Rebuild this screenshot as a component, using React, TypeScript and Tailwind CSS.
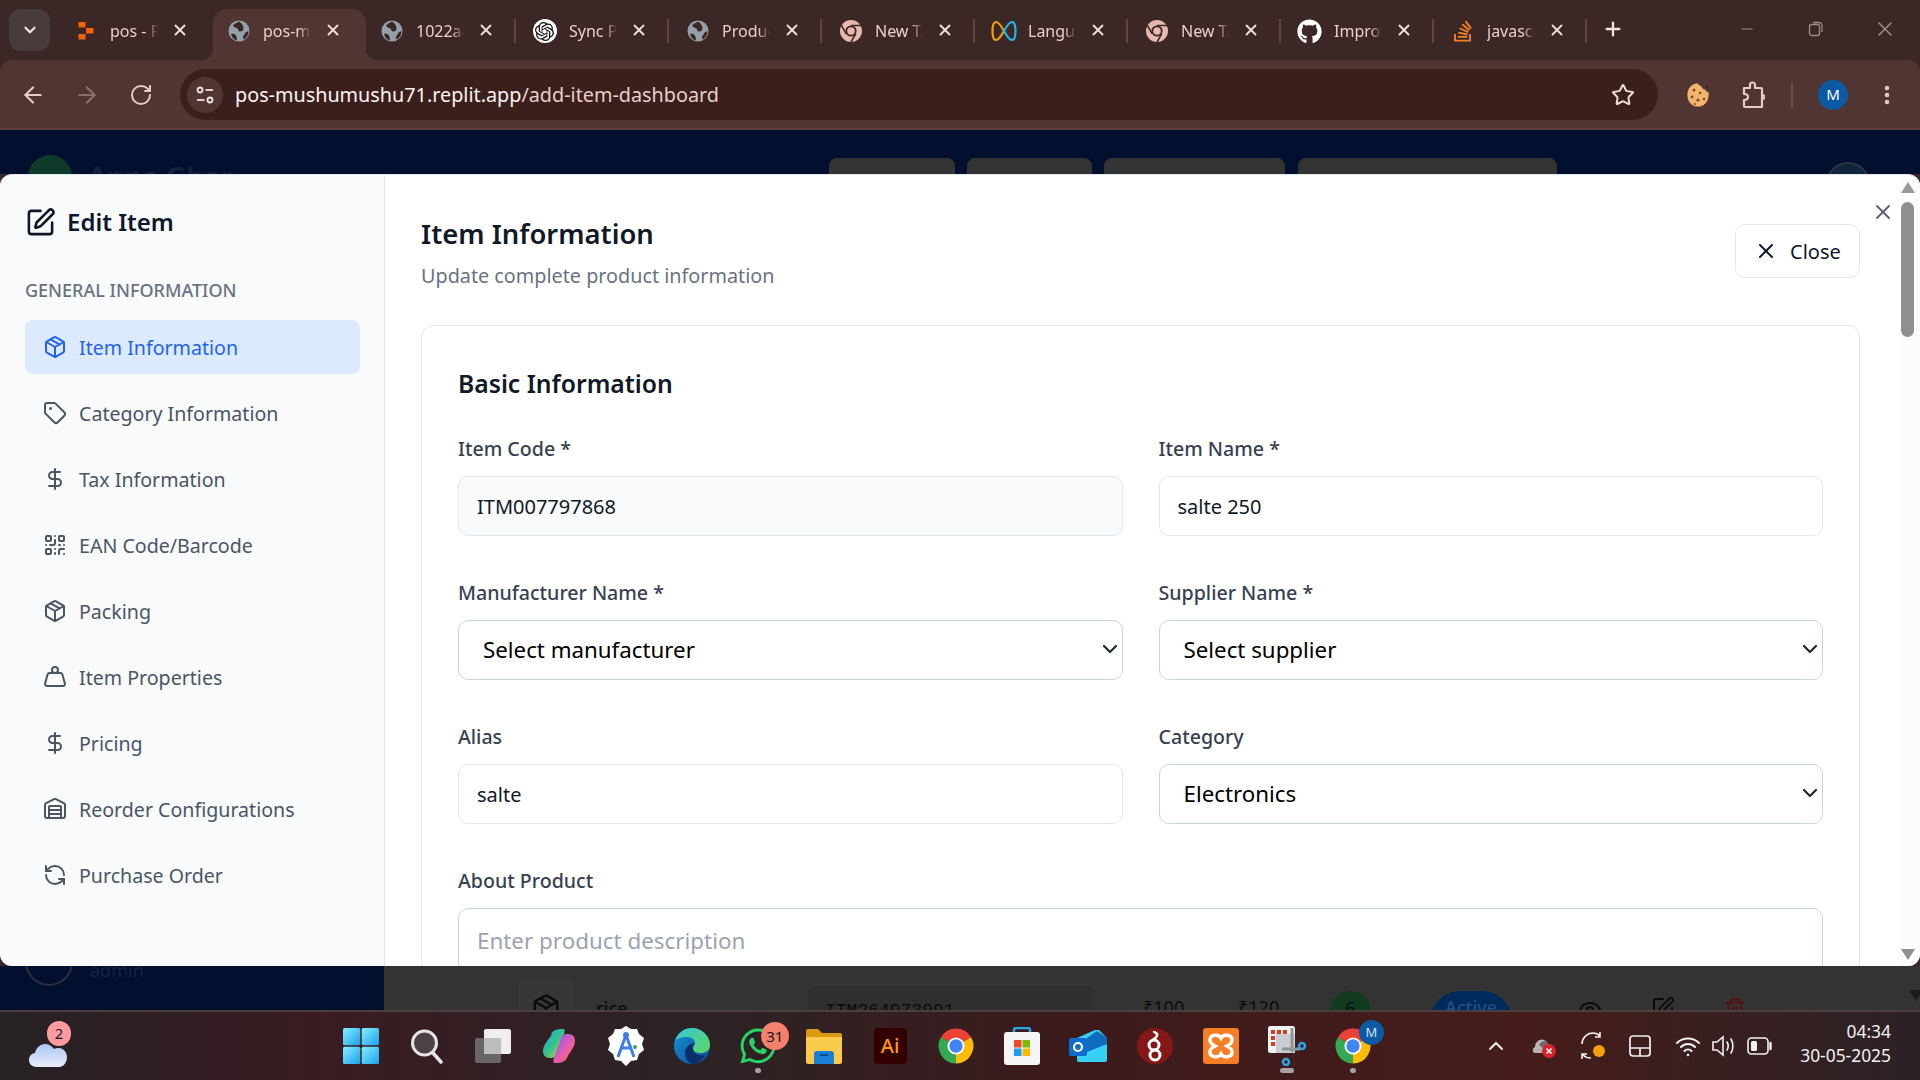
import type { ReactNode } from 'react';
import {
  ArrowLeft,
  ArrowRight,
  ChevronDown,
  ChevronUp,
  DollarSign,
  Eye,
  Minus,
  MoreVertical,
  Package,
  Plus,
  QrCode,
  RefreshCcw,
  RotateCw,
  SquarePen,
  Star,
  Tag,
  Trash2,
  Warehouse,
  Weight,
  X,
} from 'lucide-react';
import { FaGithub, FaStackOverflow, FaWhatsapp } from 'react-icons/fa';
import { SiOpenai } from 'react-icons/si';

const ChromeLogo = ({ size = 24 }: { size?: number }) => (
  <svg width={size} height={size} viewBox="0 0 24 24">
    <path d="M12 12 L2.47 6.5 A11 11 0 0 1 21.53 6.5 Z" fill="#ea4335" />
    <path d="M12 12 L21.53 6.5 A11 11 0 0 1 12 23 Z" fill="#fbbc04" />
    <path d="M12 12 L12 23 A11 11 0 0 1 2.47 6.5 Z" fill="#34a853" />
    <circle cx="12" cy="12" r="5.4" fill="#ffffff" />
    <circle cx="12" cy="12" r="4.2" fill="#4285f4" />
  </svg>
);

// tab favicon for chrome pages, single colour with dark dividers
const ChromeMono = () => (
  <svg width="24" height="24" viewBox="0 0 24 24">
    <circle cx="12" cy="12" r="11" fill="#e8b8ae" />
    <path d="M12 6.500H22M7.200 14.800L2.400 6.500M16.800 14.800L12 23" stroke="#3a2726" strokeWidth="1.500" />
    <circle cx="12" cy="12" r="5.600" fill="#3a2726" />
    <circle cx="12" cy="12" r="3.800" fill="#e8b8ae" />
  </svg>
);

const GlobeTab = () => (
  <svg width="22" height="22" viewBox="0 0 22 22">
    <circle cx="11" cy="11" r="10.500" fill="#94a0a8" />
    <path d="M11 1.500c-2 1.500-4.500 2-6 4 1 2 3 2 4.500 3 1 1 .5 2.500 2 3 2 .5 4-1 4-3 0-3-1.500-5-4.500-7Z" fill="#3a2726" />
    <path d="M3 14c2-.5 4 0 5 1.500s.5 3.500 1 5c-3-.5-5-3-6-6.500Z" fill="#3a2726" />
    <path d="M20.500 11.500c-1.500 0-3 .500-3.500 2-.5 1.500-2 2-2 4 0 1 .5 1.500 1 2 2.500-1.500 4.300-4.500 4.500-8Z" fill="#3a2726" />
  </svg>
);

const ReplitMark = () => (
  <svg width="16" height="18" viewBox="0 0 15 18">
    <rect x="0" y="0" width="7" height="5.500" fill="#f26207" />
    <rect x="7.500" y="6" width="7.500" height="5.500" fill="#f26207" />
    <rect x="0" y="12" width="7" height="5.500" fill="#f26207" />
  </svg>
);

const InfinityMark = () => (
  <svg width="26" height="24" viewBox="0 0 26 24" fill="none" strokeWidth="2.200">
    <path d="M13 12c-2.500-4.500-5-9-8-9-2.500 0-3.500 4-3.500 9s1 9 3.500 9c3 0 5.500-4.500 8-9Z" stroke="#f59e0b" />
    <path d="M13 12c2.500 4.500 5 9 8 9 2.500 0 3.500-4 3.500-9s-1-9-3.500-9c-3 0-5.500 4.500-8 9Z" stroke="#22b8e6" />
  </svg>
);

const tabs: { title: string; icon: ReactNode; active?: boolean }[] = [
  { title: 'pos - Replit', icon: <ReplitMark /> },
  { title: 'pos-mushu', icon: <GlobeTab />, active: true },
  { title: '1022a4b7', icon: <GlobeTab /> },
  {
    title: 'Sync Pro',
    icon: (
      <span className="flex h-[24px] w-[24px] items-center justify-center rounded-full bg-white">
        <SiOpenai size={19} color="#111111" />
      </span>
    ),
  },
  { title: 'Product', icon: <GlobeTab /> },
  { title: 'New Tab', icon: <ChromeMono /> },
  { title: 'Language', icon: <InfinityMark /> },
  { title: 'New Tab', icon: <ChromeMono /> },
  { title: 'Improve', icon: <FaGithub size={25} color="#ffffff" /> },
  { title: 'javascript', icon: <FaStackOverflow size={24} color="#f48024" /> },
];

const TabStrip = () => (
  <div className="flex h-[60px] shrink-0 bg-[#3a2726] pl-[9px]">
    <div className="mt-[9px] mr-[10px] flex h-[42px] w-[41px] items-center justify-center rounded-[12px] bg-[#483c3a]">
      <ChevronDown size={18} strokeWidth={3} color="#f3e2de" />
    </div>
    {tabs.map((tab, i) => (
      <div
        key={i}
        className={`relative mt-[9px] flex h-[51px] w-[153px] items-start pt-[8px] ${
          tab.active ? 'rounded-t-[14px] bg-[#503533]' : ''
        }`}
      >
        {tab.active && (
          <>
            <span className="absolute bottom-0 -left-[12px] h-[12px] w-[12px] bg-[radial-gradient(circle_at_0_0,transparent_12px,#503533_12.500px)]" />
            <span className="absolute -right-[12px] bottom-0 h-[12px] w-[12px] bg-[radial-gradient(circle_at_100%_0,transparent_12px,#503533_12.500px)]" />
          </>
        )}
        <span className="flex h-[28px] w-[50px] shrink-0 items-center justify-center pl-[1px]">{tab.icon}</span>
        <span className="w-[48px] overflow-hidden pt-[2px] text-[16px] leading-[24px] whitespace-nowrap text-[#e9cfc9] [mask-image:linear-gradient(90deg,#000_75%,transparent)]">
          {tab.title}
        </span>
        <span className="ml-[12px] flex h-[26px] w-[20px] items-center justify-center">
          <X size={18} strokeWidth={2.500} color="#f0dcd7" />
        </span>
        {i > 1 && <span className="absolute top-[10px] right-[3px] h-[24px] w-[2px] bg-[#5c4644]" />}
      </div>
    ))}
    <div className="ml-[10px] flex h-[60px] w-[26px] items-center justify-center pb-[2px]">
      <Plus size={22} strokeWidth={2.500} color="#f3e2de" />
    </div>
    <div className="ml-auto flex h-[60px] items-center pb-[2px]">
      <span className="flex w-[69px] justify-center">
        <Minus size={18} strokeWidth={1.500} color="#a08c88" />
      </span>
      <span className="flex w-[69px] justify-center">
        <svg width="16" height="16" viewBox="0 0 16 16" fill="none" stroke="#a08c88" strokeWidth="1.300">
          <rect x="1.500" y="3.500" width="10" height="11" rx="2" />
          <path d="M5 1.500h6a3 3 0 0 1 3 3V11" />
        </svg>
      </span>
      <span className="flex w-[70px] justify-center">
        <X size={24} strokeWidth={1.500} color="#a08c88" />
      </span>
    </div>
  </div>
);

const CookieIcon = () => (
  <svg width="26" height="28" viewBox="0 0 26 28">
    <path d="M13 2c1 2 2 3 4 3 0 2 1 3 3 3 1 2 2 3 4 3 1 7-3 15-11 15C6 26 2 20 2 14S6 2 13 2Z" fill="#f2b36c" stroke="#3a2726" strokeWidth=".6" />
    <g fill="#7a4b24">
      <circle cx="9" cy="9" r="1.500" />
      <circle cx="15" cy="12" r="1.300" />
      <circle cx="7" cy="16" r="1.400" />
      <circle cx="13" cy="19" r="1.600" />
      <circle cx="19" cy="18" r="1.200" />
      <circle cx="10" cy="23" r="1" />
    </g>
    <circle cx="22" cy="6" r="1" fill="#2a1a12" />
  </svg>
);

const ExtensionIcon = () => (
  <svg width="24" height="28" viewBox="0 0 24 28" fill="none" stroke="#ecc9c1" strokeWidth="2.200" strokeLinejoin="round">
    <path d="M3 7h6V4a2.500 2.500 0 0 1 5 0v3h6a1 1 0 0 1 1 1v18H4a1 1 0 0 1-1-1v-6c3 0 4-1.500 4-3s-1-3-4-3Z" />
    <path d="M21 14c2 0 2.500 1 2.500 2s-.5 2-2.500 2" />
  </svg>
);

const SiteIcon = () => (
  <svg width="20" height="20" viewBox="0 0 20 20" fill="none" stroke="#f0e2df" strokeWidth="1.800">
    <circle cx="5" cy="5" r="2.500" />
    <path d="M10.500 5H18" />
    <circle cx="15" cy="15" r="2.500" />
    <path d="M2 15h7.500" />
  </svg>
);

const Toolbar = () => (
  <div className="flex h-[70px] shrink-0 items-start rounded-t-[12px] border-b-2 border-[#5d403e] bg-[#503533] pt-[9px]">
    <div className="flex h-[51px] w-[180px] shrink-0 items-center pl-[20px]">
      <ArrowLeft size={26} strokeWidth={2} color="#ecc9c1" />
      <ArrowRight size={26} strokeWidth={2} color="#8d6f6a" className="ml-[28px]" />
      <RotateCw size={24} strokeWidth={2} color="#ecc9c1" className="ml-[29px]" />
    </div>
    <div className="flex h-[51px] w-[1478px] items-center rounded-full bg-[#3b1f1c] pl-[7px]">
      <span className="flex h-[36px] w-[36px] items-center justify-center rounded-full bg-[#503533]">
        <SiteIcon />
      </span>
      <span className="ml-[12px] text-[19.800px] leading-[28px] text-[#e6cfca]">
        <span className="text-[#fbf3f1]">pos-mushumushu71.replit.app</span>/add-item-dashboard
      </span>
      <Star size={24} strokeWidth={2} color="#f0dcd7" className="mr-[23px] ml-auto" />
    </div>
    <div className="flex h-[51px] flex-1 items-center">
      <span className="ml-[27px]">
        <CookieIcon />
      </span>
      <span className="ml-[30px] flex">
        <ExtensionIcon />
      </span>
      <span className="ml-[26px] h-[26px] w-[2px] bg-[#6b4f4c]" />
      <span className="ml-[25px] flex h-[30px] w-[30px] items-center justify-center rounded-full bg-[#0b5aa3] text-[15px] text-white">
        M
      </span>
      <MoreVertical size={24} strokeWidth={2.500} color="#ecc9c1" className="ml-[27px]" />
    </div>
  </div>
);

const navItems = [
  { label: 'Item Information', icon: Package, active: true },
  { label: 'Category Information', icon: Tag },
  { label: 'Tax Information', icon: DollarSign },
  { label: 'EAN Code/Barcode', icon: QrCode },
  { label: 'Packing', icon: Package },
  { label: 'Item Properties', icon: Weight },
  { label: 'Pricing', icon: DollarSign },
  { label: 'Reorder Configurations', icon: Warehouse },
  { label: 'Purchase Order', icon: RefreshCcw },
];

const Sidebar = () => (
  <aside className="w-[385px] shrink-0 rounded-l-[12px] border-r border-[#e2e8f0] bg-[#f8fafc] pr-[24px] pl-[25px]">
    <div className="mt-[29px] flex h-[36px] items-center text-[#0f172a]">
      <SquarePen size={31} strokeWidth={2} />
      <span className="ml-[11px] text-[24px] leading-[32px] font-semibold">Edit Item</span>
    </div>
    <p className="mt-[37px] text-[18px] leading-[26px] font-medium text-[#6b7280] uppercase">General Information</p>
    <nav className="mt-[17px] flex flex-col gap-[12px]">
      {navItems.map((item) => {
        const Icon = item.icon;
        return (
          <div
            key={item.label}
            className={`flex h-[54px] items-center rounded-[8px] pl-[18px] text-[19.600px] ${
              item.active ? 'bg-[#dbeafe] text-[#2563eb]' : 'text-[#4b5563]'
            }`}
          >
            <Icon size={24} strokeWidth={2} />
            <span className="ml-[12px] pt-[2px]">{item.label}</span>
          </div>
        );
      })}
    </nav>
  </aside>
);

const Label = ({ children }: { children: ReactNode }) => (
  <label className="mb-[13px] block text-[19.600px] leading-[28px] font-medium text-[#374151]">{children}</label>
);

const inputClass =
  'block h-[60px] w-full rounded-[10px] border border-[#e2e8f0] px-[18px] text-[20px] text-[#111827] outline-none';

const SelectField = ({ value }: { value: string }) => (
  <div className="relative">
    <select
      defaultValue={value}
      className="block h-[60px] w-full appearance-none rounded-[10px] border border-[#cbd5e1] bg-white pr-[30px] pl-[24px] text-[22.300px] text-black outline-none"
    >
      <option>{value}</option>
    </select>
    <ChevronDown size={24} strokeWidth={2.200} color="#1f2937" className="pointer-events-none absolute top-[17px] right-[1px]" />
  </div>
);

const ItemForm = () => (
  <div className="rounded-t-[12px] border border-[#e5e7eb] px-[36px] pt-[42px] pb-[40px]">
    <h3 className="mb-[35px] text-[24.700px] leading-[32px] font-semibold text-[#111827]">Basic Information</h3>
    <div className="grid grid-cols-2 gap-x-[36px] gap-y-[43px]">
      <div>
        <Label>Item Code *</Label>
        <input readOnly value="ITM007797868" className={`${inputClass} bg-[#f8fafc]`} />
      </div>
      <div>
        <Label>Item Name *</Label>
        <input readOnly value="salte 250" className={inputClass} />
      </div>
      <div>
        <Label>Manufacturer Name *</Label>
        <SelectField value="Select manufacturer" />
      </div>
      <div>
        <Label>Supplier Name *</Label>
        <SelectField value="Select supplier" />
      </div>
      <div>
        <Label>Alias</Label>
        <input readOnly value="salte" className={inputClass} />
      </div>
      <div>
        <Label>Category</Label>
        <SelectField value="Electronics" />
      </div>
      <div className="col-span-2">
        <Label>About Product</Label>
        <textarea
          readOnly
          placeholder="Enter product description"
          className="block h-[120px] w-full resize-none rounded-[10px] border border-[#cbd5e1] px-[18px] pt-[16px] text-[22.400px] leading-[32px] outline-none placeholder:text-[#9ca3af]"
        />
      </div>
    </div>
  </div>
);

const Dialog = () => (
  <div className="absolute inset-x-0 top-[44px] bottom-[44px] flex overflow-hidden rounded-[12px] border-t border-[#e2e8f0] bg-white">
    <Sidebar />
    <main className="relative min-w-0 flex-1 overflow-hidden pr-[40px] pl-[36px]">
      <div className="flex items-start justify-between pt-[41px]">
        <div>
          <h2 className="text-[27.400px] leading-[36px] font-semibold text-[#111827]">Item Information</h2>
          <p className="mt-[10px] text-[19.800px] leading-[28px] text-[#6b7280]">Update complete product information</p>
        </div>
        <button className="mt-[8px] flex h-[54px] w-[125px] items-center rounded-[10px] border border-[#e2e8f0] bg-white pl-[18px] text-[20px] text-[#0f172a]">
          <X size={24} strokeWidth={2} />
          <span className="ml-[12px] pt-[1px]">Close</span>
        </button>
      </div>
      <div className="mt-[35px]">
        <ItemForm />
      </div>
      <X size={24} strokeWidth={2} color="#5b6472" className="absolute top-[25px] right-[5px]" />
    </main>
    <div className="flex w-[20px] shrink-0 flex-col items-center bg-[#fcfcfc] pr-[5px]">
      <span className="mt-[7px] h-0 w-0 border-x-[7px] border-b-[11px] border-x-transparent border-b-[#9a9a9a]" />
      <span className="mt-[9px] h-[135px] w-[13px] rounded-full bg-[#8f8f8f]" />
      <span className="mt-auto mb-[6px] h-0 w-0 border-x-[7px] border-t-[11px] border-x-transparent border-t-[#8f8f8f]" />
    </div>
  </div>
);

const BackdropHeader = () => (
  <div className="flex h-[44px] shrink-0 overflow-hidden bg-[#030f2f]">
    <div className="flex w-[829px] shrink-0">
      <span className="mt-[25px] ml-[28px] h-[44px] w-[44px] rounded-full bg-[#0f3a2a]" />
      <span className="mt-[26px] ml-[16px] text-[28px] font-semibold whitespace-nowrap text-[#16233f]">Apna Ghar</span>
    </div>
    <span className="mt-[28px] h-[40px] w-[126px] rounded-t-[8px] bg-[#333333]" />
    <span className="mt-[28px] ml-[12px] h-[40px] w-[125px] rounded-t-[8px] bg-[#333333]" />
    <span className="mt-[28px] ml-[12px] h-[40px] w-[181px] rounded-t-[8px] bg-[#333333]" />
    <span className="mt-[28px] ml-[13px] h-[40px] w-[259px] rounded-t-[8px] bg-[#333333]" />
    <span className="mt-[32px] ml-[269px] h-[44px] w-[44px] rounded-full border-2 border-[#2d3240] bg-[#10243a]" />
  </div>
);

const BackdropFooter = () => (
  <div className="flex h-[44px] shrink-0">
    <div className="flex w-[384px] shrink-0 bg-[#030f2f] pl-[25px]">
      <span className="-mt-[28px] h-[48px] w-[48px] rounded-full border-2 border-[#2a2e3b]" />
      <span className="-mt-[8px] ml-[17px] h-[24px] text-[18px] leading-[24px] text-[#16233f]">admin</span>
    </div>
    <div className="flex min-w-0 flex-1 items-start overflow-hidden bg-[#333333] text-[#0c0c0c]">
      <span className="mt-[12px] ml-[134px] flex h-[56px] w-[56px] shrink-0 justify-center rounded-[8px] bg-[#373737] pt-[15px]">
        <Package size={30} strokeWidth={2} />
      </span>
      <span className="mt-[29px] w-[235px] shrink-0 pl-[22px] text-[18px] font-medium">rice</span>
      <span className="mt-[20px] h-[40px] w-[284px] shrink-0 rounded-[6px] bg-[#2f2f2f] pt-[12px] pl-[16px] font-['Liberation_Mono',monospace] text-[18px]">
        ITM264973991
      </span>
      <span className="mt-[28px] ml-[50px] w-[95px] shrink-0 text-[18px]">₹100</span>
      <span className="mt-[28px] w-[92px] shrink-0 text-[18px]">₹120</span>
      <span className="mt-[25px] flex h-[60px] w-[41px] shrink-0 justify-center rounded-full bg-[#123a1f] pt-[4px] text-[18px]">
        6
      </span>
      <span className="mt-[25px] ml-[59px] flex h-[60px] w-[82px] shrink-0 justify-center rounded-full bg-[#002a5c] pt-[3px] text-[18px] font-medium text-[#1e4f8a]">
        Active
      </span>
      <Eye size={24} strokeWidth={2} className="mt-[32px] ml-[66px] shrink-0" />
      <SquarePen size={24} strokeWidth={2} className="mt-[30px] ml-[49px] shrink-0" />
      <Trash2 size={22} strokeWidth={2} color="#5a0f0f" className="mt-[31px] ml-[49px] shrink-0" />
      <span className="mt-[24px] ml-[163px] h-0 w-0 shrink-0 border-x-[7px] border-t-[11px] border-x-transparent border-t-[#1c1c1c]" />
    </div>
  </div>
);

const TaskIcon = ({ children, badge, dot }: { children: ReactNode; badge?: ReactNode; dot?: 'round' | 'wide' }) => (
  <div className="relative flex h-[68px] w-[66.130px] shrink-0 items-center justify-center">
    {children}
    {badge}
    {dot && (
      <span
        className={`absolute bottom-[7px] h-[5px] rounded-full bg-[#a8a3a3] ${dot === 'wide' ? 'w-[14px]' : 'w-[6px]'}`}
      />
    )}
  </div>
);

const StartIcon = () => (
  <svg width="36" height="36" viewBox="0 0 36 36">
    <defs>
      <linearGradient id="startGrad" x1="0" y1="0" x2="1" y2="1">
        <stop offset="0" stopColor="#86efff" />
        <stop offset="1" stopColor="#1ba0ec" />
      </linearGradient>
    </defs>
    <rect x="0" y="0" width="17.300" height="17.300" rx="1.500" fill="url(#startGrad)" />
    <rect x="18.700" y="0" width="17.300" height="17.300" rx="1.500" fill="url(#startGrad)" />
    <rect x="0" y="18.700" width="17.300" height="17.300" rx="1.500" fill="url(#startGrad)" />
    <rect x="18.700" y="18.700" width="17.300" height="17.300" rx="1.500" fill="url(#startGrad)" />
  </svg>
);

const SearchIcon = () => (
  <svg width="34" height="36" viewBox="0 0 34 36" fill="none">
    <circle cx="14.500" cy="15" r="12" fill="#4d4243" stroke="#e5e5e5" strokeWidth="3" />
    <path d="M23 25l8 9" stroke="#e5e5e5" strokeWidth="3.500" strokeLinecap="round" />
  </svg>
);

const TaskViewIcon = () => (
  <svg width="36" height="36" viewBox="0 0 36 36">
    <rect x="9" y="1" width="27" height="25" rx="2" fill="#eeeeee" />
    <rect x="0" y="10" width="26" height="25" rx="2" fill="#6b6b6b" fillOpacity=".92" />
    <rect x="9" y="10" width="17" height="16" fill="#bdbdbd" />
  </svg>
);

const CopilotIcon = () => (
  <svg width="34" height="36" viewBox="0 0 34 36">
    <defs>
      <linearGradient id="copA" x1="0" y1="0" x2="1" y2="1">
        <stop offset="0" stopColor="#2a9df4" />
        <stop offset=".5" stopColor="#31c48d" />
        <stop offset="1" stopColor="#f8c537" />
      </linearGradient>
      <linearGradient id="copB" x1="0" y1="0" x2="1" y2="1">
        <stop offset="0" stopColor="#7a5af8" />
        <stop offset=".6" stopColor="#ee5fa7" />
        <stop offset="1" stopColor="#f97316" />
      </linearGradient>
    </defs>
    <path d="M9 6C11 2 15 1 21 1c2 0 2 2 1 5l-7 20c-1 3-3 4-7 4-5 0-7-3-7-7 0-6 6-12 9-17Z" fill="url(#copA)" />
    <path d="M25 30c-2 4-6 5-12 5-2 0-2-2-1-5l7-20c1-3 3-4 7-4 5 0 7 3 7 7 0 6-6 12-8 17Z" fill="url(#copB)" />
  </svg>
);

const StudioIcon = () => (
  <svg width="36" height="40" viewBox="0 0 36 40">
    <path d="M18 0l5 3 6 0 2 5 5 4-2 6 2 6-5 4-2 6-6 1-5 5-5-5-6-1-2-6-5-4 2-6-2-6 5-4 2-5 6 0Z" fill="#ffffff" />
    <path d="M18 9l-8 22M18 9l8 22M12 22h12" stroke="#3f7ee8" strokeWidth="3" fill="none" />
    <circle cx="18" cy="9" r="3" fill="#3f7ee8" />
    <circle cx="27" cy="21" r="2" fill="#36a852" />
  </svg>
);

const EdgeIcon = () => (
  <svg width="36" height="36" viewBox="0 0 36 36">
    <defs>
      <linearGradient id="edgeA" x1="0" y1="0" x2="1" y2="1">
        <stop offset="0" stopColor="#36c6d9" />
        <stop offset="1" stopColor="#5fd85f" />
      </linearGradient>
      <linearGradient id="edgeB" x1="0" y1="0" x2="1" y2="1">
        <stop offset="0" stopColor="#1591d6" />
        <stop offset="1" stopColor="#0c4d96" />
      </linearGradient>
    </defs>
    <circle cx="18" cy="18" r="18" fill="url(#edgeB)" />
    <path d="M1 13C4 4 11 0 18 0c10 0 18 8 18 17 0 6-5 8-9 8-5 0-8-2-8-5 0-2 2-3 2-5 0-3-3-6-8-6-6 0-10 2-12 4Z" fill="url(#edgeA)" />
    <path d="M20 36c-5 0-9-5-9-11s5-10 10-10c-2 2-3 4-2 7 1 4 5 6 12 5-3 5-7 9-11 9Z" fill="#0b2f6b" />
  </svg>
);

const FolderIcon = () => (
  <svg width="36" height="36" viewBox="0 0 36 36">
    <path d="M0 3a2 2 0 0 1 2-2h10l4 4h18a2 2 0 0 1 2 2v4H0Z" fill="#d99a12" />
    <path d="M0 9h36v25a2 2 0 0 1-2 2H2a2 2 0 0 1-2-2Z" fill="#fbcb4b" />
    <path d="M8 36V26a3 3 0 0 1 3-3h14a3 3 0 0 1 3 3v10Z" fill="#1b7fd6" />
    <rect x="14" y="26" width="8" height="2" fill="#0b4e92" />
  </svg>
);

const StoreIcon = () => (
  <svg width="36" height="38" viewBox="0 0 36 38">
    <path d="M10 6V3a2 2 0 0 1 2-2h12a2 2 0 0 1 2 2v3" fill="none" stroke="#2aa6e8" strokeWidth="2.500" />
    <rect x="0" y="5" width="36" height="33" rx="3" fill="#f5f5f5" />
    <rect x="10" y="13" width="7.500" height="7.500" fill="#ea4b2a" />
    <rect x="18.500" y="13" width="7.500" height="7.500" fill="#7fba00" />
    <rect x="10" y="21.500" width="7.500" height="7.500" fill="#1e9bea" />
    <rect x="18.500" y="21.500" width="7.500" height="7.500" fill="#fdb900" />
  </svg>
);

const OutlookIcon = () => (
  <svg width="38" height="32" viewBox="0 0 38 32">
    <path d="M8 8L26 0h4l8 8v22a2 2 0 0 1-2 2H10a2 2 0 0 1-2-2Z" fill="#38d1f5" />
    <path d="M18 8L28 1l10 7v6l-20 8Z" fill="#0f6cbd" />
    <rect x="0" y="8" width="18" height="18" rx="2" fill="#0f6cce" />
    <circle cx="9" cy="17" r="4" fill="none" stroke="#ffffff" strokeWidth="2.200" />
  </svg>
);

const DragonIcon = () => (
  <svg width="36" height="36" viewBox="0 0 36 36" fill="none">
    <circle cx="18" cy="18" r="18" fill="#851716" />
    <circle cx="17" cy="17" r="5" stroke="#ffffff" strokeWidth="3" />
    <circle cx="18" cy="27" r="5" stroke="#ffffff" strokeWidth="3" />
    <path d="M16 12c2-2 5-3 4-6-1-2-3-1-3-3" stroke="#ffffff" strokeWidth="2.500" />
  </svg>
);

const XamppIcon = () => (
  <svg width="36" height="36" viewBox="0 0 36 36" fill="none">
    <rect width="36" height="36" rx="3" fill="#f57f24" />
    <path d="M18 10c-2-4-11-4-11 2 0 3 3 5 5 6-2 1-5 3-5 6 0 6 9 6 11 2 2 4 11 4 11-2 0-3-3-5-5-6 2-1 5-3 5-6 0-6-9-6-11-2Z" stroke="#ffffff" strokeWidth="3.500" />
  </svg>
);

const SnipIcon = () => (
  <svg width="38" height="40" viewBox="0 0 38 40" fill="none">
    <rect width="27" height="27" rx="2.500" fill="#f2f2f2" />
    <rect x="3" y="4" width="4" height="4" fill="#d63b1f" />
    <rect x="9" y="4" width="4" height="4" fill="#d63b1f" />
    <rect x="15" y="4" width="4" height="4" fill="#d63b1f" />
    <rect x="3" y="10" width="4" height="4" fill="#d63b1f" />
    <rect x="3" y="16" width="4" height="4" fill="#d63b1f" />
    <rect x="8" y="8" width="19" height="19" fill="#c9cdd1" />
    <path d="M24 2v24M14 23h18" stroke="#8f949a" strokeWidth="3" />
    <circle cx="34" cy="20" r="3" stroke="#2aa6e8" strokeWidth="2.400" />
    <circle cx="18" cy="36" r="3" stroke="#2aa6e8" strokeWidth="2.400" />
  </svg>
);

const WeatherIcon = () => (
  <svg width="38" height="32" viewBox="0 0 38 32">
    <defs>
      <linearGradient id="cloudGrad" x1="0" y1="0" x2="0" y2="1">
        <stop offset="0" stopColor="#a9c7f5" />
        <stop offset="1" stopColor="#e9eefb" />
      </linearGradient>
    </defs>
    <rect x="26" y="0" width="6" height="8" fill="#f0801f" />
    <path d="M8 32C3 32 0 29 0 25c0-4 3-7 6-7 1-5 5-9 10-9 4 0 7 2 9 5 1-1 3-1 5-1 4 0 8 4 8 9 0 6-4 10-8 10Z" fill="url(#cloudGrad)" />
  </svg>
);

const CountBadge = ({ value, className }: { value: string; className: string }) => (
  <span
    className={`absolute flex items-center justify-center rounded-full text-[15px] leading-none text-[#1a1a1a] ${className}`}
  >
    {value}
  </span>
);

const OneDriveTray = () => (
  <svg width="26" height="26" viewBox="0 0 26 26">
    <path d="M4 20c-3 0-3-5 0-6 0-5 5-9 9-7 3 1 4 4 4 7v6Z" fill="#b9b3b3" />
    <path d="M8 12c2-4 6-5 9-3l-4 7Z" fill="#6e6767" />
    <circle cx="18" cy="18" r="7" fill="#d9202d" />
    <path d="M15.500 15.500l5 5m0-5l-5 5" stroke="#ffffff" strokeWidth="1.600" />
  </svg>
);

const SyncTray = () => (
  <svg width="28" height="30" viewBox="0 0 28 30" fill="none" stroke="#f2f2f2" strokeWidth="1.600">
    <path d="M4 13C4 7 9 2 15 2c3 0 5 1 7 3M22 1v5h-5" />
    <path d="M13 27c-3 0-6-1-8-3M4 28v-5h5" />
    <circle cx="21" cy="20" r="6" fill="#f59f0b" stroke="none" />
  </svg>
);

const TouchpadTray = () => (
  <svg width="24" height="24" viewBox="0 0 24 24" fill="none" stroke="#f2f2f2" strokeWidth="1.700">
    <rect x="2" y="2" width="20" height="20" rx="3" />
    <path d="M2 14h20M12 14v8" />
  </svg>
);

const WifiTray = () => (
  <svg width="26" height="26" viewBox="0 0 26 26" fill="none" stroke="#f2f2f2" strokeWidth="2" strokeLinecap="round">
    <path d="M2 10c6-6 16-6 22 0" />
    <path d="M6 14c4-4 10-4 14 0" />
    <path d="M9.500 18c2-2 5-2 7 0" />
    <circle cx="13" cy="22" r="1.300" fill="#f2f2f2" stroke="none" />
  </svg>
);

const VolumeTray = () => (
  <svg width="26" height="26" viewBox="0 0 26 26" fill="none" stroke="#f2f2f2" strokeWidth="1.600" strokeLinecap="round">
    <path d="M2 9h4l6-5v18l-6-5H2Z" />
    <path d="M16 9c1.500 2.500 1.500 5.500 0 8" />
    <path d="M20 6c2.500 4 2.500 10 0 14" />
  </svg>
);

const BatteryTray = () => (
  <svg width="26" height="24" viewBox="0 0 26 24" fill="none" stroke="#f2f2f2" strokeWidth="1.600">
    <rect x="1" y="4" width="20" height="16" rx="3.500" />
    <rect x="4" y="7" width="6" height="10" rx="1.500" fill="#f2f2f2" stroke="none" />
    <path d="M23.500 9v6" strokeWidth="2.400" strokeLinecap="round" />
  </svg>
);

const Taskbar = () => (
  <div className="flex h-[70px] shrink-0 items-start border-t-2 border-[#4a3e3e] bg-[linear-gradient(90deg,#262224_0%,#3a1c22_17%,#2b2325_35%,#3c1b1d_55%,#451c1a_80%,#2b2226_100%)]">
    <div className="relative flex h-[68px] w-[328px] shrink-0 items-end pb-[13px] pl-[29px]">
      <WeatherIcon />
      <CountBadge value="2" className="top-[9px] left-[47px] h-[25px] w-[24px] bg-[#ff9aa0]" />
    </div>
    <TaskIcon>
      <StartIcon />
    </TaskIcon>
    <TaskIcon>
      <SearchIcon />
    </TaskIcon>
    <TaskIcon>
      <TaskViewIcon />
    </TaskIcon>
    <TaskIcon>
      <CopilotIcon />
    </TaskIcon>
    <TaskIcon>
      <StudioIcon />
    </TaskIcon>
    <TaskIcon>
      <EdgeIcon />
    </TaskIcon>
    <TaskIcon dot="round" badge={<CountBadge value="31" className="top-[10px] left-[36px] h-[28px] w-[28px] bg-[#f5806d]" />}>
      <FaWhatsapp size={40} color="#25d366" />
    </TaskIcon>
    <TaskIcon>
      <FolderIcon />
    </TaskIcon>
    <TaskIcon>
      <span className="flex h-[36px] w-[33px] items-center justify-center rounded-[4px] bg-[#330000] text-[20px] font-medium text-[#ff9a00]">
        Ai
      </span>
    </TaskIcon>
    <TaskIcon>
      <ChromeLogo size={38} />
    </TaskIcon>
    <TaskIcon>
      <StoreIcon />
    </TaskIcon>
    <TaskIcon>
      <OutlookIcon />
    </TaskIcon>
    <TaskIcon>
      <DragonIcon />
    </TaskIcon>
    <TaskIcon>
      <XamppIcon />
    </TaskIcon>
    <TaskIcon dot="wide">
      <SnipIcon />
    </TaskIcon>
    <TaskIcon
      dot="round"
      badge={
        <span className="absolute top-[8px] left-[39px] flex h-[25px] w-[25px] items-center justify-center rounded-full bg-[#0b5aa3] text-[13px] text-[#cfe3f7]">
          M
        </span>
      }
    >
      <ChromeLogo size={38} />
    </TaskIcon>
    <div className="ml-[86px] flex h-[68px] items-center">
      <span className="flex w-[48px] justify-center">
        <ChevronUp size={24} strokeWidth={2} color="#f2f2f2" />
      </span>
      <span className="flex w-[48px] justify-center">
        <OneDriveTray />
      </span>
      <span className="flex w-[48px] justify-center">
        <SyncTray />
      </span>
      <span className="flex w-[48px] justify-center">
        <TouchpadTray />
      </span>
      <span className="flex w-[48px] justify-center">
        <WifiTray />
      </span>
      <span className="-ml-[6px] flex w-[36px] justify-center">
        <VolumeTray />
      </span>
      <span className="flex w-[36px] justify-center">
        <BatteryTray />
      </span>
    </div>
    <div className="mt-[7px] mr-[29px] ml-auto text-right text-[17.400px] leading-[24px] text-[#f2f2f2]">
      <p>04:34</p>
      <p>30-05-2025</p>
    </div>
  </div>
);

export default function App() {
  return (
    <div className="flex h-[1080px] w-[1920px] flex-col overflow-hidden bg-[#3a2726] font-['Noto_Sans',sans-serif]">
      <TabStrip />
      <Toolbar />
      <div className="relative flex flex-1 flex-col justify-between overflow-hidden">
        <BackdropHeader />
        <BackdropFooter />
        <Dialog />
      </div>
      <Taskbar />
    </div>
  );
}
